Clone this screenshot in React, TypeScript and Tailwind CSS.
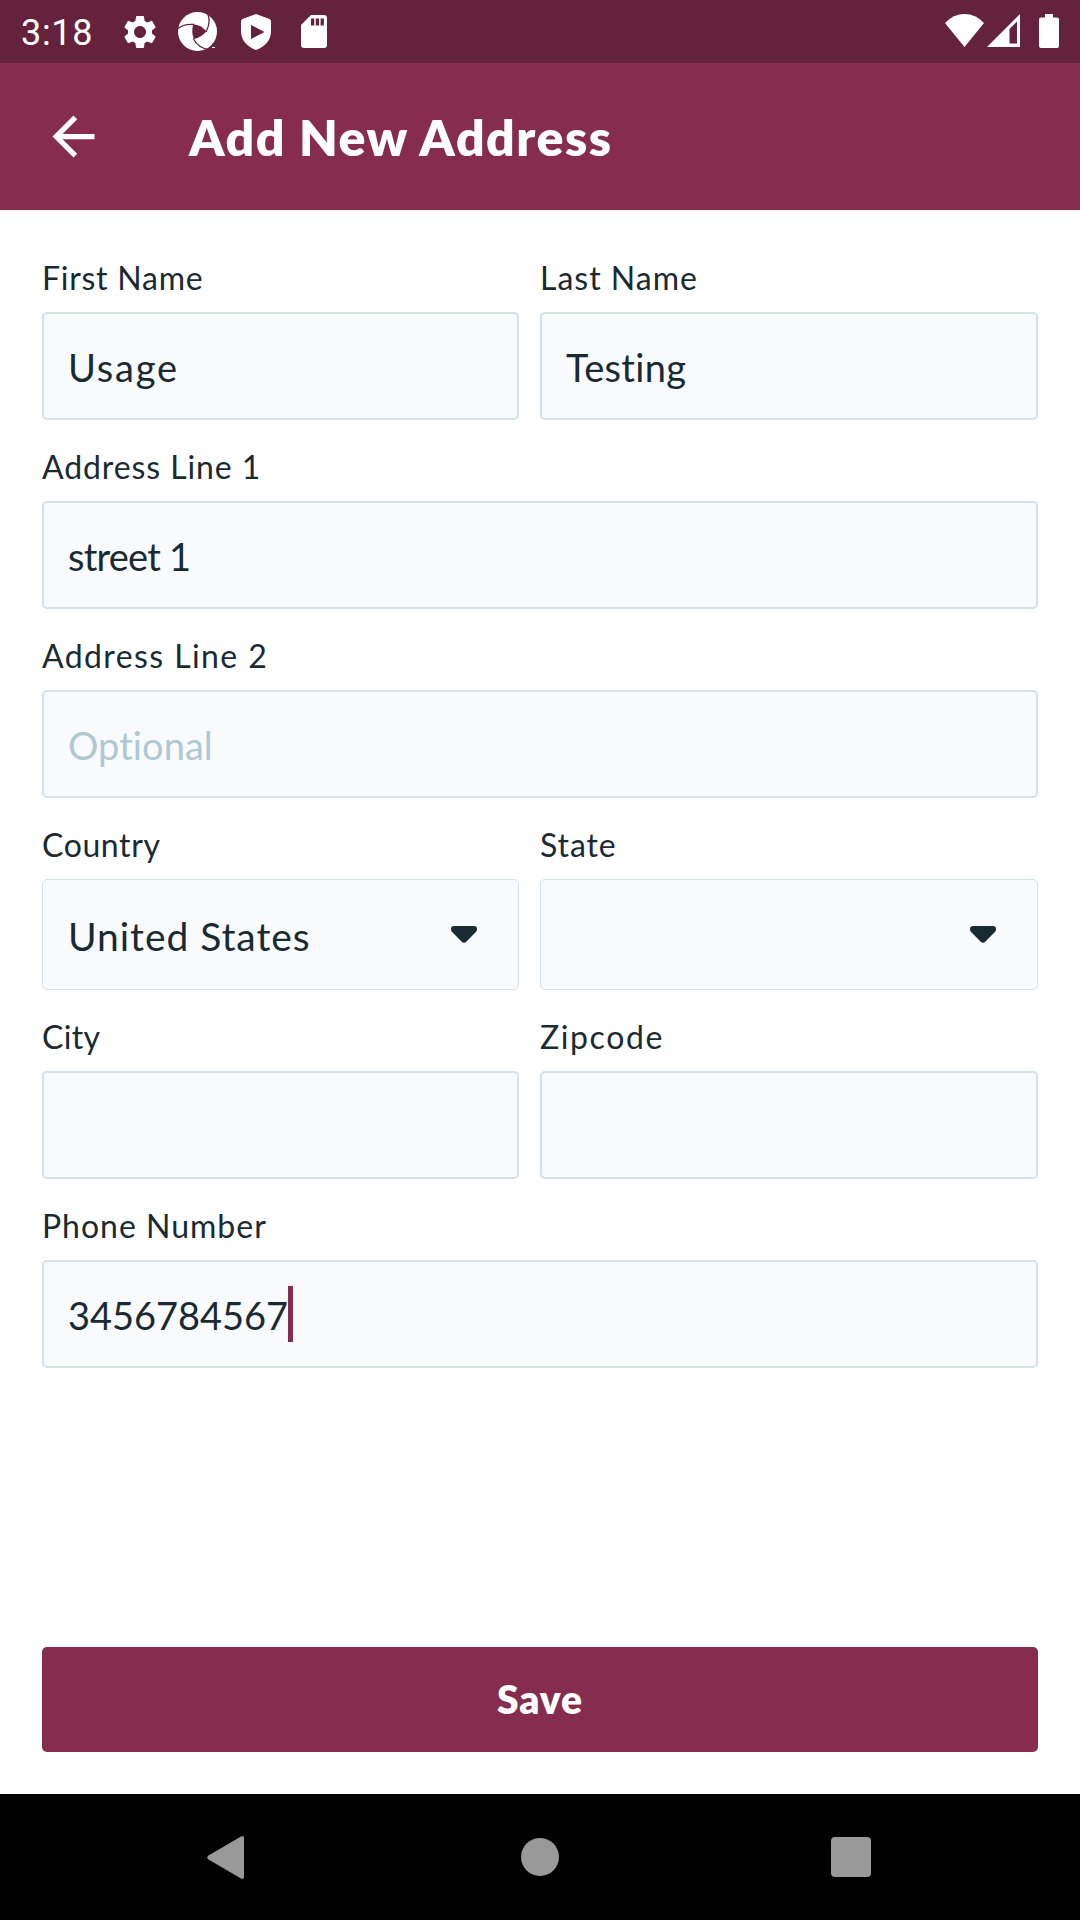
import React from "react";

type FieldProps = {
  label: string;
  labelClass?: string;
  value?: string;
  valueClass?: string;
  className?: string;
  placeholder?: boolean;
  select?: boolean;
  caret?: boolean;
};

function Field({
  label,
  labelClass = "",
  value = "",
  valueClass = "",
  className = "",
  placeholder = false,
  select = false,
  caret = false,
}: FieldProps) {
  return (
    <div className={className}>
      <div className="h-[55px] whitespace-nowrap pt-px text-[32px] leading-10">
        <span className={labelClass}>{label}</span>
      </div>
      <div
        className={
          select
            ? "flex h-[111px] items-center rounded-[5px] border border-[#d3e2ea] bg-[#f9fafc] pl-[25px]"
            : "flex h-[108px] items-center rounded-[5px] border-2 border-[#d3e2ea] bg-[#f9fafc] pl-6"
        }
      >
        <span
          className={`whitespace-nowrap pt-0.5 leading-[48px] ${select ? "text-[39px]" : "text-[38px]"} ${placeholder ? "text-[#afc9d3]" : ""} ${valueClass}`}
        >
          {value}
        </span>
        {caret && <span className="h-14 w-[5px] bg-[#852c4f]" />}
        {select && (
          <svg className="ml-auto mr-[41px] h-[17px] w-[26px]" viewBox="0 0 26 17" fill="#1a2a33">
            <path d="M3 0H23Q26 0 26 3.2Q26 5 24.6 6.3L15.3 15.8Q13 17.6 10.7 15.8L1.4 6.3Q0 5 0 3.2Q0 0 3 0Z" />
          </svg>
        )}
      </div>
    </div>
  );
}

function StatusBar() {
  return (
    <div className="flex h-[63px] items-start bg-[#64223c] text-white">
      <span className="ml-[21px] mt-3 w-[103px] font-[Roboto] text-[36px] leading-[42px] tracking-[0.7px]">3:18</span>
      <svg className="-ml-[4px] mt-3 size-[40px] shrink-0" viewBox="0 0 24 24" fill="currentColor">
        <path d="M19.14 12.94c.04-.3.06-.61.06-.94 0-.32-.02-.64-.07-.94l2.03-1.58c.18-.14.23-.41.12-.61l-1.92-3.32c-.12-.22-.37-.29-.59-.22l-2.39.96c-.5-.38-1.03-.7-1.62-.94l-.36-2.54c-.04-.24-.24-.41-.48-.41h-3.84c-.24 0-.43.17-.47.41l-.36 2.54c-.59.24-1.13.57-1.62.94l-2.39-.96c-.22-.08-.47 0-.59.22L2.74 8.87c-.12.21-.08.47.12.61l2.03 1.58c-.05.3-.09.63-.09.94s.02.64.07.94l-2.03 1.58c-.18.14-.23.41-.12.61l1.92 3.32c.12.22.37.29.59.22l2.39-.96c.5.38 1.03.7 1.62.94l.36 2.54c.05.24.24.41.48.41h3.84c.24 0 .44-.17.47-.41l.36-2.54c.59-.24 1.13-.56 1.62-.94l2.39.96c.22.08.47 0 .59-.22l1.92-3.32c.12-.22.07-.47-.12-.61l-2.01-1.58zM12 15.6c-1.98 0-3.6-1.62-3.6-3.6s1.62-3.6 3.6-3.6 3.6 1.62 3.6 3.6-1.62 3.6-3.6 3.6z" />
      </svg>
      <svg className="ml-[18px] mt-3 size-10 shrink-0" viewBox="0 0 40 40">
        <circle cx="19.5" cy="19.5" r="19.5" fill="#fff" />
        <g fill="none" stroke="#64223c" strokeWidth="1.3">
          <path d="M-1 17.500Q5 11.500 16 12.500" />
          <path d="M28.500 -1Q34 9 28 20" />
          <path d="M15.500 27Q20 36 32 38" />
        </g>
        <path d="M15.300 12.300Q23 13 28.500 19.300Q23.500 25.500 15.800 27.300Q13 19.500 15.300 12.300Z" fill="#64223c" />
        <path d="M34 35.500H37" stroke="#fff" strokeWidth="1" />
      </svg>
      <svg className="ml-[23px] mt-3.5 h-9 w-[30px] shrink-0" viewBox="0 0 30 36">
        <path d="M15 0L28.500 5Q30 5.600 30 7.500V17Q30 30 15 36Q0 30 0 17V7.500Q0 5.600 1.500 5Z" fill="#fff" />
        <path d="M10 11L23.500 18L10 25Z" fill="#64223c" />
      </svg>
      <svg className="ml-[30px] mt-[15px] h-[33px] w-[26px] shrink-0" viewBox="0 0 26 33">
        <path d="M10 0H23Q26 0 26 3V30Q26 33 23 33H3Q0 33 0 30V10Z" fill="#fff" />
        <path d="M10 3.500h3.300v7h-3.300zM14.800 3.500h3.300v7h-3.300zM19.600 3.500h3.300v7h-3.300z" fill="#64223c" />
      </svg>
      <svg className="ml-auto mt-3.5 h-[33px] w-[39px] shrink-0" viewBox="0 0 39 33">
        <path d="M0 9Q8.500 0 19.500 0Q30.500 0 39 9L19.500 33Z" fill="#fff" />
      </svg>
      <svg className="ml-[3px] mt-3.5 h-[33px] w-[33px] shrink-0" viewBox="0 0 33 33">
        <path d="M33 0V33H0ZM30 7.500L22.500 15V29.500H30Z" fill="#fff" fillRule="evenodd" />
      </svg>
      <svg className="ml-[19px] mr-[21px] mt-3.5 h-[34px] w-5 shrink-0" viewBox="0 0 20 34">
        <path d="M6 0H14V3.500H18Q20 3.500 20 5.500V32Q20 34 18 34H2Q0 34 0 32V5.500Q0 3.500 2 3.500H6Z" fill="#fff" />
      </svg>
    </div>
  );
}

export default function App() {
  return (
    <div className="flex h-[1920px] w-[1080px] flex-col overflow-hidden bg-white font-[Lato,sans-serif] text-[#1a2a33]">
      <StatusBar />
      <header className="flex h-[147px] items-center bg-[#852c4f] text-white">
        <svg className="ml-[42px] size-[63px] shrink-0" viewBox="0 0 24 24" fill="currentColor">
          <path d="M20 11H7.830l5.590-5.590L12 4l-8 8 8 8 1.410-1.410L7.830 13H20v-2z" />
        </svg>
        <h1 className="ml-[84px] whitespace-nowrap text-[50px] font-extrabold leading-[60px] tracking-[1.5px]">
          Add New Address
        </h1>
      </header>

      <main className="flex flex-1 flex-col px-[42px] pb-[42px] pt-[47px]">
        <div className="flex flex-col gap-[26px]">
          <div className="flex gap-[21px]">
            <Field
              className="w-[477px]"
              label="First Name"
              labelClass="tracking-[0.75px]"
              value="Usage"
              valueClass="tracking-[1.8px]"
            />
            <Field
              className="w-[498px]"
              label="Last Name"
              labelClass="tracking-[1px]"
              value="Testing"
              valueClass="tracking-[0.35px]"
            />
          </div>
          <Field
            label="Address Line 1"
            labelClass="tracking-[0.9px]"
            value="street 1"
            valueClass="tracking-[-0.8px]"
          />
          <Field
            label="Address Line 2"
            labelClass="tracking-[1.4px]"
            value="Optional"
            valueClass="tracking-[0.05px]"
            placeholder
          />
          <div className="flex gap-[21px]">
            <Field
              className="w-[477px]"
              label="Country"
              labelClass="tracking-[0.6px]"
              value="United States"
              valueClass="tracking-[0.95px]"
              select
            />
            <Field className="w-[498px]" label="State" labelClass="tracking-[0.9px]" select />
          </div>
          <div className="flex gap-[21px]">
            <Field className="w-[477px]" label="City" labelClass="tracking-[0.3px]" />
            <Field className="w-[498px]" label="Zipcode" labelClass="tracking-[1.6px]" />
          </div>
          <Field
            label="Phone Number"
            labelClass="tracking-[1px]"
            value="3456784567"
            valueClass="tracking-[-0.03px]"
            caret
          />
        </div>
        <button className="mt-auto h-[105px] rounded-[5px] bg-[#852c4f] pb-0.5 text-[39px] font-extrabold leading-[48px] tracking-[0.9px] text-white">
          Save
        </button>
      </main>

      <nav className="flex h-[126px] items-center bg-black">
        <svg className="ml-[207px] h-[43px] w-[37px]" viewBox="0 0 37 43" fill="#999">
          <path d="M34 .5Q37 -.8 37 2V41Q37 43.800 34 42.500L1.500 23.500Q-1 21.500 1.500 19.500Z" />
        </svg>
        <div className="ml-[277px] size-[38px] rounded-full bg-[#999]" />
        <div className="ml-[272px] size-10 rounded-[4px] bg-[#999]" />
      </nav>
    </div>
  );
}
